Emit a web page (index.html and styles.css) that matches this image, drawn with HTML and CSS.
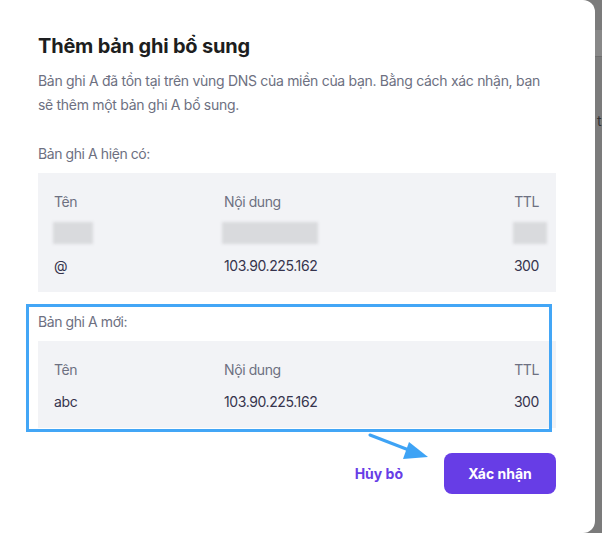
FILE: index.html
```html
<!DOCTYPE html>
<html lang="vi">
<head>
<meta charset="utf-8">
<title>Thêm bản ghi bổ sung</title>
<link rel="stylesheet" href="styles.css">
</head>
<body>
<div class="backdrop">
  <div class="modal">
    <h1 class="title">Thêm bản ghi bổ sung</h1>
    <p class="desc">Bản ghi A đã tồn tại trên vùng DNS của miền của bạn. Bằng cách xác nhận, bạn sẽ thêm một bản ghi A bổ sung.</p>

    <div class="section-label first">Bản ghi A hiện có:</div>
    <div class="table">
      <div class="row head">
        <span>Tên</span><span>Nội dung</span><span class="r">TTL</span>
      </div>
      <div class="row">
        <span><i class="blur b-name"></i></span><span><i class="blur b-content"></i></span><span class="r"><i class="blur b-ttl"></i></span>
      </div>
      <div class="row">
        <span>@</span><span>103.90.225.162</span><span class="r">300</span>
      </div>
    </div>

    <div class="section-label second">Bản ghi A mới:</div>
    <div class="table">
      <div class="row head">
        <span>Tên</span><span>Nội dung</span><span class="r">TTL</span>
      </div>
      <div class="row">
        <span>abc</span><span>103.90.225.162</span><span class="r">300</span>
      </div>
    </div>

    <div class="footer">
      <button class="btn-cancel">Hủy bỏ</button>
      <button class="btn-primary">Xác nhận</button>
    </div>

    <div class="highlight"></div>
    <svg class="arrow" width="80" height="40" viewBox="0 0 80 40">
      <line x1="2" y1="3" x2="46" y2="20" stroke="#3ea3f5" stroke-width="3" stroke-linecap="round"/>
      <polygon points="60,25 41,10 35,27" fill="#3ea3f5"/>
    </svg>
  </div>
  <div class="side">
    <div class="side-band"></div>
    <div class="side-text">tr</div>
  </div>
</div>
</body>
</html>
```
FILE: styles.css
```css
* { box-sizing: border-box; }
html, body { margin: 0; padding: 0; }
body {
  width: 602px;
  height: 533px;
  overflow: hidden;
  background: #7b7b7b;
  font-family: Inter, "DejaVu Sans", sans-serif;
}
.backdrop {
  display: flex;
  height: 533px;
}
.modal {
  position: relative;
  width: 595px;
  height: 533px;
  background: #fff;
  border-radius: 0 12px 12px 0;
  padding: 32px 39px 0 38px;
  flex: none;
}
.title {
  margin: 0;
  font-size: 20px;
  line-height: 28px;
  font-weight: 700;
  color: #1d1e20;
  letter-spacing: -0.2px;
}
.desc {
  margin: 9px 0 0;
  max-width: 512px;
  font-size: 14px;
  line-height: 24px;
  color: #6d7081;
  letter-spacing: -0.3px;
}
.section-label {
  font-size: 14px;
  line-height: 24px;
  color: #6d7081;
  letter-spacing: -0.42px;
}
.section-label.first { margin-top: 25px; }
.section-label.second { margin-top: 18px; }
.table {
  margin-top: 7px;
  background: #f2f3f6;
  padding: 12px 17px 11px 16px;
}
.row {
  display: grid;
  grid-template-columns: 170px 1fr auto;
  height: 32px;
  align-items: center;
  font-size: 14px;
  color: #36344d;
  letter-spacing: -0.4px;
}
.row.head { color: #6d7081; }
.row .r { text-align: right; }
.blur {
  display: inline-block;
  vertical-align: middle;
  height: 22px;
  background: #d9dadd;
  filter: blur(1.5px);
}
.b-name { width: 40px; margin-left: -1px; }
.b-content { width: 96px; margin-left: -2px; }
.b-ttl { width: 34px; margin-right: -8px; }
.footer {
  margin-top: 25px;
  display: flex;
  justify-content: flex-end;
  align-items: center;
}
.btn-cancel {
  border: 0;
  background: transparent;
  font-family: inherit;
  font-size: 14px;
  font-weight: 700;
  color: #673de6;
  height: 41px;
  padding: 0 24px;
  margin-right: 17px;
}
.btn-primary {
  border: 0;
  background: #673de6;
  color: #fff;
  font-family: inherit;
  font-size: 14px;
  font-weight: 700;
  width: 112px;
  height: 41px;
  border-radius: 8px;
}
.highlight {
  position: absolute;
  left: 26px;
  top: 304px;
  width: 526px;
  height: 128px;
  border: 3px solid #43a6f6;
}
.arrow {
  position: absolute;
  left: 368px;
  top: 432px;
}
.side {
  flex: 1;
  position: relative;
  background: #7b7b7b;
  overflow: hidden;
}
.side-band {
  margin-top: 30px;
  height: 27px;
  background: #888;
  border-bottom: 1px solid #6f6f6f;
}
.side-text {
  position: absolute;
  top: 112px;
  left: 2px;
  font-size: 14px;
  color: #333;
}
```
